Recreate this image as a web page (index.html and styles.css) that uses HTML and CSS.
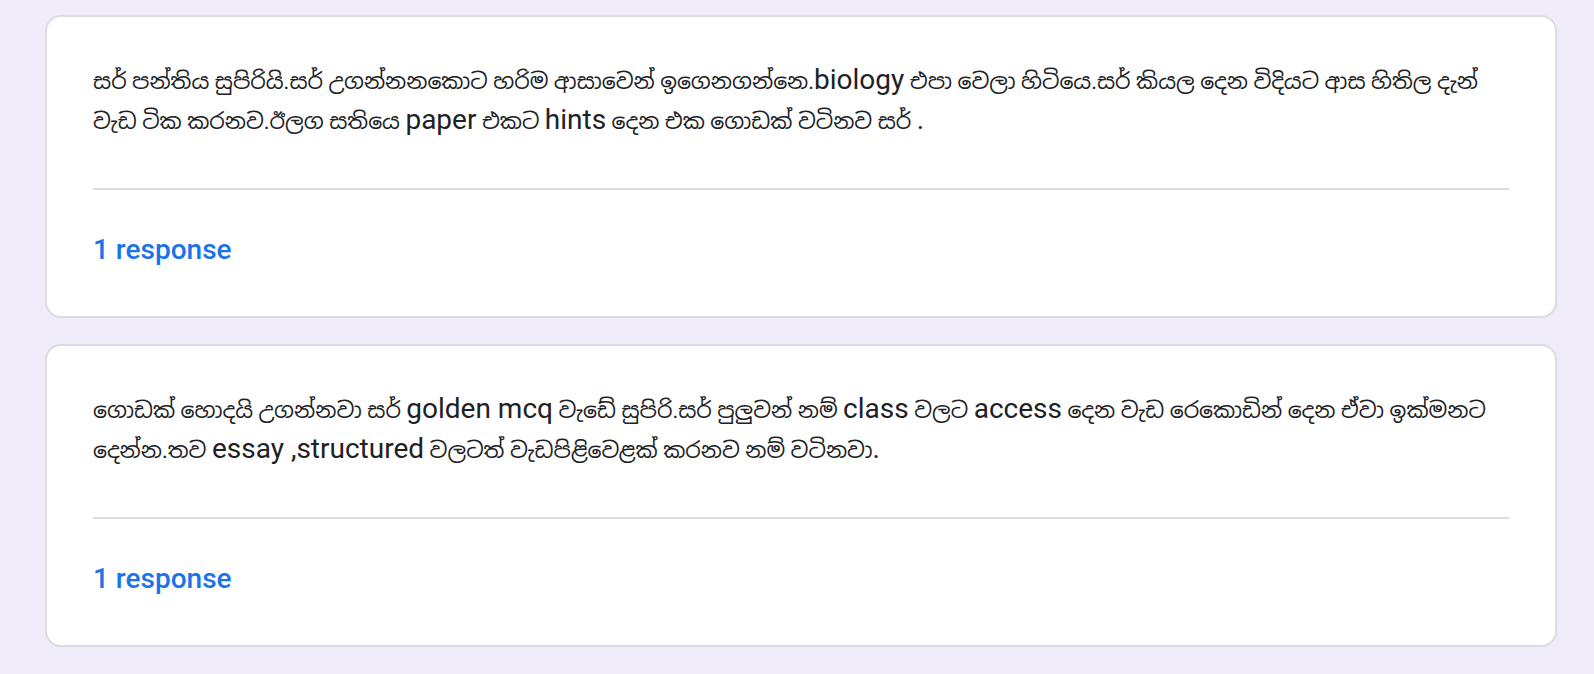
FILE: index.html
```html
<!DOCTYPE html>
<html>
<head>
<meta charset="utf-8">
<link rel="stylesheet" href="styles.css">
</head>
<body>
<div class="list">
  <div class="card">
    <div class="text">සර් පන්තිය සුපිරියි.සර් උගන්නනකොට හරිම ආසාවෙන් ඉගෙනගන්නෙ.<span class="lat">biology</span> එපා වෙලා හිටියෙ.සර් කියල දෙන විදියට ආස හිතිල දැන් වැඩ ටික කරනව.ඊලග සතියෙ <span class="lat">paper</span> එකට <span class="lat">hints</span> දෙන එක ගොඩක් වටිනව සර් <span class="lat">.</span></div>
    <div class="divider"></div>
    <div class="resp">1 response</div>
  </div>
  <div class="card">
    <div class="text">ගොඩක් හොදයි උගන්නවා සර් <span class="lat">golden mcq</span> වැඩේ සුපිරි.සර් පුලුවන් නම් <span class="lat">class</span> වලට <span class="lat">access</span> දෙන වැඩ රෙකොඩින් දෙන ඒවා ඉක්මනට දෙන්න.තව <span class="lat">essay ,structured</span> වලටත් වැඩපිළිවෙළක් කරනව නම් වටිනවා<span class="lat">.</span></div>
    <div class="divider"></div>
    <div class="resp">1 response</div>
  </div>
</div>
</body>
</html>
```
FILE: styles.css
```css
html, body {
  margin: 0;
  padding: 0;
  background: #f0ebf8;
  overflow: hidden;
}
.list {
  display: flex;
  flex-direction: column;
  gap: 26px;
  padding: 15px 37px 0 45px;
}
.card {
  box-sizing: border-box;
  background: #fff;
  border: 2px solid #dadce0;
  border-radius: 16px;
  padding: 45px 46px 46px 46px;
}
.text {
  font-family: Roboto, "Noto Sans Sinhala", sans-serif;
  font-size: 22px;
  line-height: 40px;
  color: #202124;
}
.lat {
  font-size: 28px;
  line-height: 28px;
}
.divider {
  height: 2px;
  background: #dadce0;
  margin-top: 46px;
}
.resp {
  font-family: Roboto, sans-serif;
  font-weight: 500;
  font-size: 28px;
  line-height: 40px;
  color: #1a73e8;
  margin-top: 40px;
}
```
